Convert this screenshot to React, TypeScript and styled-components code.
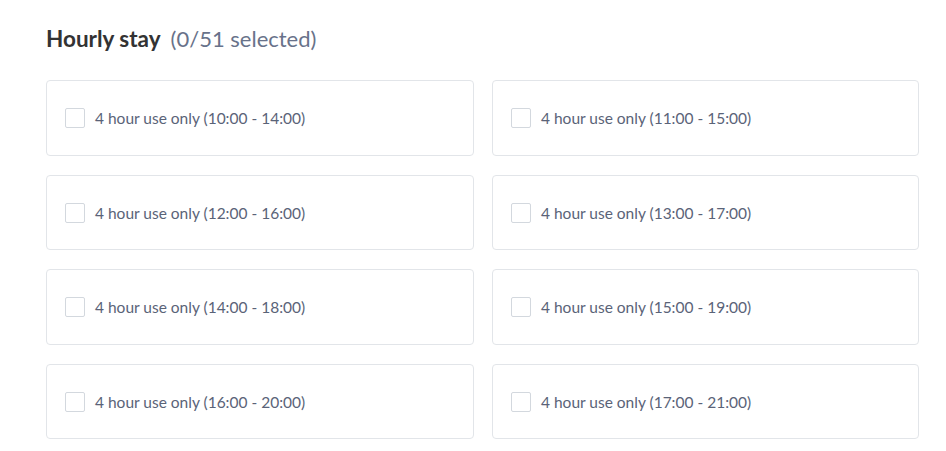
import React from "react";
import styled, { createGlobalStyle } from "styled-components";

const Global = createGlobalStyle`
  html, body { margin: 0; padding: 0; background: #ffffff; }
  body { font-family: Lato, "Noto Sans", sans-serif; }
`;

const Page = styled.div`
  padding: 25px 0 0 46px;
  width: 873px;
`;

const Title = styled.h2`
  margin: 0;
  font-size: 22.5px;
  line-height: 28px;
  font-weight: 700;
  color: #333333;
  display: flex;
  align-items: baseline;
  gap: 10px;
`;

const Count = styled.span`
  font-weight: 400;
  font-size: 22px;
  color: #68728a;
`;

const Grid = styled.div`
  margin-top: 27px;
  display: grid;
  grid-template-columns: 428px 427px;
  column-gap: 18px;
  row-gap: 19px;
`;

const Card = styled.label`
  box-sizing: border-box;
  height: 75.5px;
  border: 1px solid #e2e5e9;
  border-radius: 4px;
  display: flex;
  align-items: center;
  padding: 1px 0 0 18px;
  gap: 10px;
  cursor: pointer;
`;

const Box = styled.span`
  box-sizing: border-box;
  width: 20px;
  height: 20px;
  border: 1px solid #d3d8de;
  border-radius: 2px;
  background: #fff;
  flex: none;
`;

const Label = styled.span`
  font-size: 15.5px;
  color: #5a6378;
`;

const slots = [
  "10:00 - 14:00",
  "11:00 - 15:00",
  "12:00 - 16:00",
  "13:00 - 17:00",
  "14:00 - 18:00",
  "15:00 - 19:00",
  "16:00 - 20:00",
  "17:00 - 21:00",
];

export default function App() {
  return (
    <>
      <Global />
      <Page>
        <Title>
          Hourly stay<Count>(0/51 selected)</Count>
        </Title>
        <Grid>
          {slots.map((s) => (
            <Card key={s}>
              <Box />
              <Label>4 hour use only ({s})</Label>
            </Card>
          ))}
        </Grid>
      </Page>
    </>
  );
}
